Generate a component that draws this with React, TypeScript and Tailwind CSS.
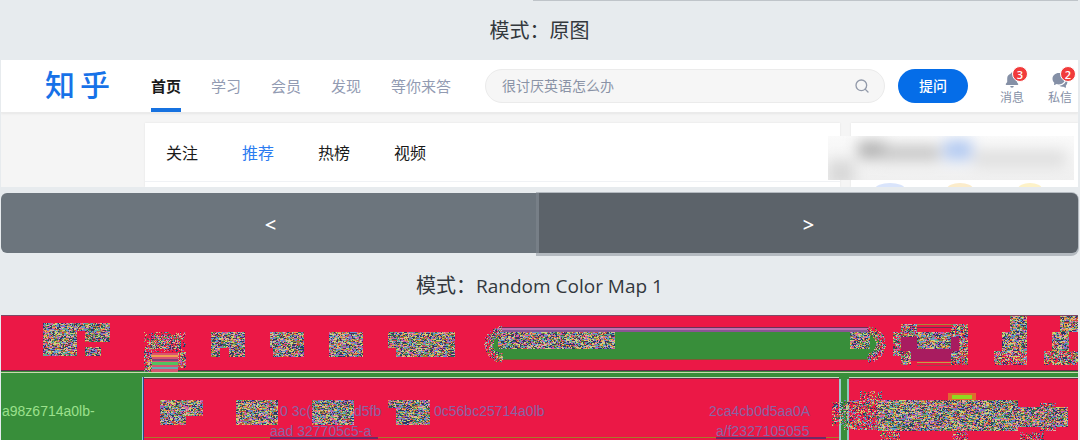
import { Search } from "lucide-react";

const navLinks = ["首页", "学习", "会员", "发现", "等你来答"];
const tabs = ["关注", "推荐", "热榜", "视频"];

const palette = [
  "#e8a04c", "#4a2f5c", "#5fae8e", "#c8d878", "#2f6f4f", "#8f5fc0",
  "#d8b8a0", "#243a6a", "#c84a3a", "#5f98d0", "#8a8a3a", "#d860a0",
];

// x, y, width, height, density
const noiseAreas = [
  [43, 8, 34, 33, 1],
  [77, 8, 33, 8, 1],
  [85, 16, 25, 11, 1],
  [85, 32, 16, 9, 1],
  [144, 17, 42, 20, 0.35],
  [151, 20, 30, 14, 0.7],
  [144, 37, 8, 20, 0.8],
  [178, 37, 8, 16, 0.8],
  [211, 17, 34, 16, 1],
  [211, 33, 9, 9, 1],
  [229, 33, 16, 9, 1],
  [270, 17, 34, 16, 1],
  [273, 33, 31, 9, 1],
  [329, 17, 34, 25, 1],
  [388, 17, 67, 16, 1],
  [396, 33, 59, 9, 1],
  [498, 17, 117, 17, 1],
  [850, 17, 20, 17, 1],
  [917, 17, 34, 17, 1],
  [893, 17, 8, 24, 0.8],
  [901, 9, 16, 13, 0.8],
  [901, 36, 10, 14, 0.8],
  [951, 9, 17, 13, 0.8],
  [959, 22, 9, 28, 0.8],
  [951, 36, 9, 14, 0.8],
  [1010, 1, 17, 16, 1],
  [1002, 17, 25, 19, 1],
  [994, 36, 33, 14, 0.8],
  [1060, 1, 18, 16, 1],
  [1052, 17, 17, 19, 1],
  [1044, 36, 34, 14, 0.8],
  [160, 85, 43, 16, 1],
  [160, 101, 26, 9, 1],
  [236, 85, 42, 25, 1],
  [312, 85, 42, 25, 1],
  [388, 85, 42, 8, 1],
  [396, 93, 34, 17, 1],
  [832, 87, 12, 24, 0.5],
  [844, 85, 34, 30, 0.6],
  [860, 76, 22, 9, 0.4],
  [878, 85, 140, 31, 1],
  [1018, 92, 50, 20, 1],
  [1040, 88, 16, 28, 0.7],
  [880, 117, 20, 8, 0.5],
  [952, 117, 16, 8, 0.5],
  [1020, 117, 24, 8, 0.5],
];

function buildNoise() {
  let seed = 20417;
  const rand = () => {
    seed = (seed + 0x6d2b79f5) | 0;
    let t = Math.imul(seed ^ (seed >>> 15), 1 | seed);
    t = (t + Math.imul(t ^ (t >>> 7), 61 | t)) ^ t;
    return ((t ^ (t >>> 14)) >>> 0) / 4294967296;
  };
  const paths = palette.map(() => "");
  let last = 0;
  for (const [x, y, w, h, density] of noiseAreas) {
    for (let row = 0; row < h; row++) {
      for (let col = 0; col < w; col++) {
        if (rand() > density) continue;
        // some pixels repeat their neighbour so the grain is not too fine
        if (rand() > 0.25) last = Math.floor(rand() * palette.length);
        paths[last] += `M${x + col} ${y + row}h1v1h-1z`;
      }
    }
  }
  // rounded ends of the search box
  for (let i = 0; i < 800; i++) {
    const angle = rand() * Math.PI * 2;
    const radius = 9 + rand() * 9;
    const dx = Math.cos(angle) * radius;
    const cx = dx < 0 ? 502 : 867;
    const px = Math.round(cx + dx);
    const py = Math.round(29 + Math.sin(angle) * radius);
    paths[Math.floor(rand() * palette.length)] += `M${px} ${py}h1v1h-1z`;
  }
  return paths;
}

const noise = buildNoise();

function ModeLabel({ children }: { children: React.ReactNode }) {
  return (
    <h2 className="text-center text-xl leading-7 text-[#33383d]">
      模式：{children}
    </h2>
  );
}

function Badge({ count }: { count: number }) {
  return (
    <span className="absolute -top-1.5 left-2 grid size-4 place-items-center rounded-full border border-white bg-[#f13b3b] text-[11px] leading-none font-semibold text-white">
      {count}
    </span>
  );
}

function BellIcon() {
  return (
    <svg viewBox="0 0 16 16" className="size-4" fill="#8590a6" aria-hidden="true">
      <path d="M8 0.5a1.3 1.3 0 0 1 1.3 1.3C11.5 2.4 12.8 4.2 12.8 6.4v3.7l1.3 1.6c.4.5.1 1.3-.6 1.3h-11c-.7 0-1-.8-.6-1.3l1.3-1.6V6.4c0-2.2 1.3-4 3.5-4.6A1.3 1.3 0 0 1 8 .5zM6.2 14h3.6a1.8 1.8 0 0 1-3.6 0z" />
    </svg>
  );
}

function ChatIcon() {
  return (
    <svg viewBox="0 0 16 16" className="size-4" fill="#8590a6" aria-hidden="true">
      <path d="M6.8 1C3.3 1 .5 3.5.5 6.7c0 1.6.7 3 1.8 4L2 12.6c0 .4.3.6.7.4l1.8-.9c.7.2 1.5.4 2.3.4 3.5 0 6.3-2.5 6.3-5.7S10.3 1 6.8 1z" />
      <path d="M14.4 6c.1 4.2-3 7.3-7 7.7 1 .9 2.5 1.3 4 1.1l2 .9c.4.1.7-.1.6-.5l-.2-1.5c1.9-1.9 2.3-5.6.6-7.7z" />
    </svg>
  );
}

function SiteHeader() {
  return (
    <header className="relative flex h-[53px] items-center border-b border-[#ebebeb] bg-white pl-[44px] pr-1.5 shadow-[0_1px_2px_rgba(0,0,0,0.06)]">
      <a href="#home" className="flex gap-[5px] pb-0.5 text-[30px] font-medium leading-8 text-[#1772e8]" aria-label="知乎">
        <span>知</span>
        <span>乎</span>
      </a>
      <nav className="ml-[41px] flex h-full gap-[30px] text-[15px]">
        {navLinks.map((label, i) => (
          <a
            key={label}
            href="#nav"
            className={
              i === 0
                ? "flex items-center border-y-4 border-t-transparent border-b-[#1772e0] font-bold whitespace-nowrap text-[#1a1a1a]"
                : "flex items-center whitespace-nowrap text-[#929bb2]"
            }
          >
            {label}
          </a>
        ))}
      </nav>
      <label className="ml-[34px] flex h-[34px] min-w-0 flex-1 items-center rounded-full border border-[#ebebeb] bg-[#f6f6f6] pl-4 pr-3.5">
        <input
          type="search"
          aria-label="搜索"
          placeholder="很讨厌英语怎么办"
          className="min-w-0 flex-1 bg-transparent text-sm outline-none placeholder:text-[#8a93a6]"
        />
        <Search className="size-4 text-[#929aaa]" strokeWidth={2} />
      </label>
      <button className="ml-[13px] h-[34px] w-[70px] rounded-full bg-[#056de8] text-sm font-medium text-white">
        提问
      </button>
      <div className="ml-8 flex gap-6 pt-1.5 text-xs leading-4 text-[#8590a6]">
        <button className="flex flex-col items-center gap-0.5 whitespace-nowrap">
          <span className="relative">
            <BellIcon />
            <Badge count={3} />
          </span>
          消息
        </button>
        <button className="flex flex-col items-center gap-0.5 whitespace-nowrap">
          <span className="relative">
            <ChatIcon />
            <Badge count={2} />
          </span>
          私信
        </button>
      </div>
    </header>
  );
}

function OriginalView() {
  return (
    <section className="overflow-hidden bg-[#f5f5f5]">
      <SiteHeader />
      <div className="relative flex gap-[11px] pl-36 pt-[10px]">
        <div className="h-16 flex-1 bg-white shadow-[0_0_2px_rgba(0,0,0,0.08)]">
          <div className="flex h-[59px] items-center gap-11 border-b border-[#f0f2f5] px-[21px] pt-0.5 text-base text-[#1a1a1a]">
            {tabs.map((tab) => (
              <a key={tab} href="#tab" className={tab === "推荐" ? "text-[#2c7cf0]" : ""}>
                {tab}
              </a>
            ))}
          </div>
        </div>
        <div className="flex h-16 w-[227px] items-end overflow-hidden bg-white px-[25px] shadow-[0_0_2px_rgba(0,0,0,0.08)]">
          <svg viewBox="0 0 177 4" className="h-1 w-full" aria-hidden="true">
            <ellipse cx="14" cy="6" rx="15" ry="6" fill="#d9e4fb" />
            <ellipse cx="84" cy="6" rx="13" ry="6" fill="#fbeccb" />
            <ellipse cx="154" cy="6" rx="12" ry="6" fill="#fdf2c8" />
          </svg>
        </div>
        {/* blurred account name */}
        <div className="absolute right-1 top-[23px] h-11 w-[246px] overflow-hidden bg-linear-to-b from-[#fafafa] to-[#f0f0f0]">
          <svg viewBox="0 0 246 44" className="h-full w-full" aria-hidden="true">
            <defs>
              <filter id="haze" filterUnits="userSpaceOnUse" x="-40" y="-40" width="330" height="130">
                <feGaussianBlur stdDeviation="7" />
              </filter>
            </defs>
            <g filter="url(#haze)">
              <rect x="30" y="5" width="28" height="18" fill="#b4b4b4" />
              <rect x="54" y="9" width="58" height="16" fill="#c8c8c8" />
              <rect x="116" y="4" width="28" height="20" fill="#b3caf2" />
              <rect x="146" y="14" width="92" height="18" fill="#e0e0e0" />
              <rect x="0" y="24" width="26" height="26" fill="#d8d8d8" />
            </g>
          </svg>
        </div>
      </div>
    </section>
  );
}

function ColorMapView() {
  return (
    <svg
      viewBox="1 0 1077 125"
      className="block h-auto w-full"
      shapeRendering="crispEdges"
      role="img"
      aria-label="Random Color Map 1"
    >
      <rect width="1078" height="125" fill="#eb1846" />
      <rect width="1078" height="1" fill="#7d4a66" />
      <rect y="55" width="1078" height="8" fill="#388e3a" />
      <rect y="55" width="1078" height="1" fill="#62294a" />
      <rect y="57" width="1078" height="1" fill="#c9d8b0" />
      <rect x="142" y="62" width="936" height="1" fill="#c2dcc0" />
      <rect x="142" y="63" width="936" height="1" fill="#6d2f46" />
      <rect y="58" width="142" height="67" fill="#388e3a" />
      <rect x="142" y="62" width="1" height="63" fill="#8fd0d8" />
      <rect x="143" y="62" width="1" height="63" fill="#2c4a8c" />
      <rect x="144" y="122" width="695" height="1" fill="#a8782c" />
      <rect x="270" y="122" width="108" height="2" fill="#6f2a66" />
      <rect x="716" y="122" width="110" height="2" fill="#6f2a66" />

      <rect x="490" y="17" width="390" height="24" rx="12" fill="#388e3a" />
      <rect x="498" y="13" width="370" height="32" fill="#388e3a" />
      <rect x="498" y="12" width="370" height="1" fill="#6c3058" />
      <rect x="498" y="13" width="370" height="2" fill="#c070b0" />
      <rect x="498" y="15" width="370" height="2" fill="#8a5494" />
      <rect x="498" y="44" width="370" height="1" fill="#7d5a32" />
      <rect x="151" y="38" width="27" height="19" fill="#d85470" />
      <rect x="151" y="40" width="27" height="2" fill="#f0a050" />
      <rect x="151" y="44" width="27" height="2" fill="#80407a" />
      <rect x="151" y="47" width="27" height="3" fill="#52c060" />
      <rect x="151" y="52" width="27" height="2" fill="#68a8b0" />
      <rect x="901" y="20" width="58" height="26" fill="#a81c60" />
      <rect x="917" y="9" width="34" height="1" fill="#a88a38" />
      <rect x="917" y="12" width="34" height="1" fill="#70304c" />
      <rect x="917" y="47" width="34" height="1" fill="#c0a048" />
      <rect x="917" y="50" width="34" height="1" fill="#a0404c" />
      <rect x="839" y="58" width="10" height="67" fill="#388e3a" />
      <rect x="839" y="64" width="2" height="61" fill="#a0c8d0" />
      <rect x="847" y="64" width="2" height="61" fill="#8fc8b8" />
      <rect x="948" y="78" width="28" height="7" fill="#e06a30" />
      <rect x="952" y="80" width="20" height="4" fill="#90d820" />

      <g fontFamily="Liberation Sans, sans-serif" fontSize="14">
        <text x="2" y="101" fill="#9be08c">a98z6714a0lb-</text>
        <g fill="#8a64a4">
          <text x="280" y="101">0 3c(1</text>
          <text x="354" y="101">d5fb</text>
          <text x="434" y="101">0c56bc25714a0lb</text>
          <text x="270" y="121">aad 327705c5-a</text>
          <text x="709" y="101">2ca4cb0d5aa0A</text>
          <text x="716" y="121">a/f2327105055</text>
        </g>
      </g>

      {noise.map((d, i) => (
        <path key={palette[i]} d={d} fill={palette[i]} />
      ))}
    </svg>
  );
}

export default function App() {
  return (
    <main className="overflow-hidden bg-[#e7ebee] pl-px pr-0.5 font-['Open_Sans','Noto_Sans_CJK_SC',sans-serif]">
      <div className="ml-auto h-px w-[545px] bg-[#bfc4c9]" />
      <div className="pb-[15px] pt-4">
        <ModeLabel>原图</ModeLabel>
      </div>
      <OriginalView />
      <div className="mt-1.5 flex text-xl font-semibold text-white">
        <button className="h-[60px] flex-1 rounded-l-md bg-[#6c757d] pt-1">&lt;</button>
        <button className="-ml-px h-[60px] flex-1 rounded-r-md bg-[#5c636a] pt-1 shadow-[-1px_1px_0_2px_rgba(130,138,145,0.5)]">
          &gt;
        </button>
      </div>
      <div className="pb-[15px] pt-[19px]">
        <ModeLabel>
          <span className="text-[19px]">Random Color Map 1</span>
        </ModeLabel>
      </div>
      <ColorMapView />
    </main>
  );
}
